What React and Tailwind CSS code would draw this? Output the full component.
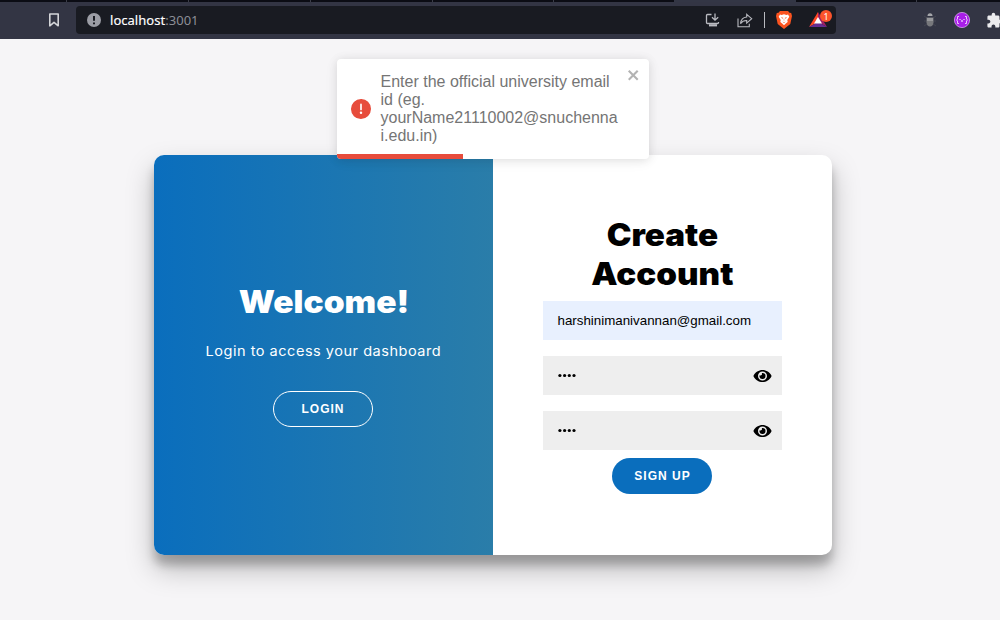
import React from "react";
import { FaEye } from "react-icons/fa";
import { MdExtension } from "react-icons/md";

function TabStrip() {
  return (
    <div className="flex h-[2px] w-full bg-[#0b0c14]">
      <div className="w-[67px] border-r border-[#3b3d48]" />
      <div className="w-[122px] border-r border-[#3b3d48]" />
      <div className="w-[122px] border-r border-[#3b3d48]" />
      <div className="w-[122px] border-r border-[#3b3d48]" />
      <div className="w-[121px] border-r border-[#3b3d48]" />
      <div className="w-[120px]" />
      <div className="w-[122px] bg-[#333645]" />
      <div className="w-[121px] border-r border-[#3b3d48]" />
    </div>
  );
}

function BrowserBar() {
  return (
    <header className="h-[39px] w-full overflow-hidden bg-[#333544]">
      <TabStrip />
      <div className="flex h-[36px] items-center">
        <svg className="ml-[48px] h-[14px] w-[12px] shrink-0" viewBox="0 0 12 14" fill="none" stroke="#d4d5d9" strokeWidth="1.6">
          <path d="M1.8 1h8.4v11.8L6 9.4l-4.2 3.4z" strokeLinejoin="round" />
        </svg>
        <div className="ml-[16px] flex h-[28px] w-[760px] shrink-0 items-center rounded-[4px] bg-[#191b22]">
          <svg className="ml-[11px] h-[14px] w-[14px] shrink-0" viewBox="0 0 14 14">
            <circle cx="7" cy="7" r="7" fill="#9b9da5" />
            <path d="M7 3v4.8M7 9.4v1.8" stroke="#191b22" strokeWidth="2" />
          </svg>
          <div className="ml-[9px] w-[595px] shrink-0 font-['Noto_Sans','Open_Sans',sans-serif] text-[13px] leading-[18px] tracking-[0.03px] text-white">
            <span className="[-webkit-text-stroke:0.15px_white]">localhost</span><span className="text-[#8c8e96]">:3001</span>
          </div>
          <svg className="h-[14px] w-[16px] shrink-0" viewBox="0 0 16 14" fill="none" stroke="#b9bac0" strokeWidth="1.3">
            <path d="M6.500 1.500H2.500q-1 0-1 1v7q0 1 1 1h10q1 0 1-1V9M10 .5v6.500M7 4.200l3 3 3.200-3" />
            <path d="M4 12.300h8" strokeWidth="2.200" />
          </svg>
          <svg className="ml-[16px] h-[15px] w-[16px] shrink-0" viewBox="0 0 16 15" fill="none" stroke="#b9bac0" strokeWidth="1.1">
            <path d="M1 5.500v8.300h11.300v-3M9.700 1.300l5 4.400-5 4.400V7.500C6.800 7.400 5 8.400 3.500 10.600 3.900 6.800 6 4.400 9.700 4z" />
          </svg>
          <div className="ml-[11px] h-[16px] w-px shrink-0 bg-[#b9bac0]" />
          <svg className="ml-[11px] h-[18px] w-[16px] shrink-0" viewBox="0 0 16 18">
            <path d="M4 0h8l1.500 1.800 1.700.2.800 3-1.700 8L8 18l-6.300-5L0 5l.8-3 1.700-.2z" fill="#fb5420" />
            <path d="M4 3.500l1.600.4L8 3.300l2.400.6 1.600-.4 1.300 2.200-2 3.200.4 2L9.800 12.600l-1.800 1.700-1.800-1.700-1.900-1.700.4-2-2-3.200z" fill="#fff" />
            <path d="M4.800 6.300l2.400.4-.7 1zM11.200 6.300l-2.400.4.7 1zM7.800 7.500h.4v2.300h-.4zM6.300 10.500l1.700.7 1.700-.7L8 12z" fill="#fb5420" />
          </svg>
          <div className="relative ml-[17px] h-[20px] w-[24px] shrink-0">
            <svg className="absolute left-0 top-[2px] h-[15px] w-[18px]" viewBox="0 0 18 15">
              <path d="M9 0L0 15l9-5z" fill="#ff4724" />
              <path d="M9 0l9 15-9-5z" fill="#9e1f63" />
              <path d="M0 15h18l-9-5z" fill="#662d91" />
              <path d="M9 5l4 6.500H5z" fill="#fff" />
            </svg>
            <span className="absolute left-[11px] top-0 flex h-[12px] w-[12px] items-center justify-center rounded-full bg-[#fb542b] font-['Noto_Sans',sans-serif] text-[9px] leading-none text-white">1</span>
          </div>
        </div>
        <svg className="ml-[88px] h-[16px] w-[12px] shrink-0" viewBox="0 0 12 16">
          <path d="M0 4l3 2M12 4L9 6M0 9h12M0 14l3-2M12 14l-3-2" stroke="#444652" />
          <path d="M3.500 4Q3.500 1.200 6 1.200T8.500 4z" fill="#a4a5a9" />
          <path d="M2.500 5.500h7v5Q9 14.500 6 14.500T2.500 10.500z" fill="#77787c" />
          <path d="M3 6h6v3H3z" fill="#97989b" />
        </svg>
        <svg className="ml-[18px] h-[16px] w-[16px] shrink-0" viewBox="0 0 16 16">
          <circle cx="8" cy="8" r="7.600" fill="#a91ee8" stroke="#d6a2ec" strokeWidth=".8" />
          <path d="M5 4.500H3.500V7l-1 1 1 1v2.500H5M11 4.500h1.500V7l1 1-1 1v2.500H11" fill="none" stroke="#f1d7fb" strokeWidth=".9" />
          <path d="M5.500 7h1v1h-1zM9.500 7h1v1h-1zM7 8.500h2v1H7z" fill="#fff" />
        </svg>
        <MdExtension className="ml-[16px] h-[17px] w-[17px] shrink-0 text-[#ececef]" />
      </div>
    </header>
  );
}

function Toast() {
  return (
    <div className="absolute left-[337px] top-[59px] flex h-[100px] w-[312px] items-center overflow-hidden rounded-[4px] bg-white shadow-[0_1px_10px_0_rgba(0,0,0,0.1),0_2px_15px_0_rgba(0,0,0,0.05)]">
      <svg viewBox="0 0 24 24" className="ml-[14px] h-[20px] w-[20px] shrink-0" fill="#e74c3c">
        <path d="M11.983 0a12.206 12.206 0 00-8.510 3.653A11.800 11.800 0 000 12.207 11.779 11.779 0 0011.800 24h.214A12.111 12.111 0 0024 11.791 11.766 11.766 0 0011.983 0zM10.500 16.542a1.476 1.476 0 011.449-1.530h.027a1.527 1.527 0 011.523 1.470 1.475 1.475 0 01-1.449 1.530h-.027a1.529 1.529 0 01-1.523-1.470zM11 12.500v-6a1 1 0 012 0v6a1 1 0 11-2 0z" />
      </svg>
      <p className="ml-[9.500px] whitespace-nowrap font-['Liberation_Sans',Arial,sans-serif] text-[16px] leading-[18px] text-[#757575]">
        Enter the official university email<br />
        id (eg.<br />
        yourName21110002@snuchenna<br />
        i.edu.in)
      </p>
      <svg className="absolute left-[290px] top-[8px] h-[16px] w-[14px] fill-[#b3b3b3]" viewBox="0 0 14 16">
        <path fillRule="evenodd" d="M7.710 8.230l3.750 3.750-1.480 1.480-3.750-3.750-3.750 3.750L1 11.980l3.750-3.750L1 4.480 2.480 3l3.750 3.750L9.980 3l1.480 1.480-3.750 3.750z" />
      </svg>
      <div className="absolute bottom-0 left-0 h-[5px] w-[126px] bg-[#e74c3c]" />
    </div>
  );
}

function PasswordField() {
  return (
    <div className="mb-[16px] flex h-[39px] w-[239px] items-center justify-between bg-[#eee] pl-[15px] pr-[10px]">
      <svg className="h-[5px] w-[20px]" viewBox="0 0 20 5">
        <circle cx="1.900" cy="2.500" r="1.600" />
        <circle cx="6.600" cy="2.500" r="1.600" />
        <circle cx="11.300" cy="2.500" r="1.600" />
        <circle cx="16" cy="2.500" r="1.600" />
      </svg>
      <FaEye className="mt-px h-[16px] w-[19px] text-black" />
    </div>
  );
}

export default function App() {
  return (
    <div className="relative h-[620px] w-[1000px] overflow-hidden bg-[#f6f5f7]">
      <BrowserBar />
      <main className="ml-[154px] mt-[116px] flex h-[400px] w-[678px] overflow-hidden rounded-[10px] bg-white shadow-[0_14px_28px_rgba(0,0,0,0.25),0_10px_10px_rgba(0,0,0,0.22)]">
        <section className="flex w-[339px] flex-col items-center bg-linear-to-r/srgb from-[#0a6ebd] to-[#2a7da9] pt-[127px] text-white">
          <h1 className="scale-x-[1.08] whitespace-nowrap font-['Inter',sans-serif] text-[31px] font-black leading-[39px]">Welcome!</h1>
          <p className="mr-px mt-[20px] scale-x-[1.077] whitespace-nowrap font-['Inter',sans-serif] text-[13.5px] leading-[20px] tracking-[0.47px]">Login to access your dashboard</p>
          <button className="mr-px mt-[30px] h-[36px] w-[100px] rounded-full border border-white font-['Liberation_Sans',Arial,sans-serif] text-[12px] font-bold leading-[14px] tracking-[1px]">LOGIN</button>
        </section>
        <section className="flex w-[339px] flex-col items-center pt-[60px]">
          <h1 className="mb-[8px] scale-x-[1.07] whitespace-nowrap text-center font-['Inter',sans-serif] text-[31px] font-black leading-[39px] text-black">Create<br />Account</h1>
          <div className="mb-[16px] flex h-[39px] w-[239px] shrink-0 items-center bg-[#e8f0fe] pl-[14.500px] font-['Liberation_Sans',Arial,sans-serif] text-[13.333px] text-black">harshinimanivannan@gmail.com</div>
          <PasswordField />
          <PasswordField />
          <button className="mr-px mt-[-8px] h-[36px] w-[100px] rounded-full bg-[#0a6ebd] pl-px font-['Liberation_Sans',Arial,sans-serif] text-[12px] font-bold leading-[14px] tracking-[1px] text-white">SIGN UP</button>
        </section>
      </main>
      <Toast />
    </div>
  );
}
